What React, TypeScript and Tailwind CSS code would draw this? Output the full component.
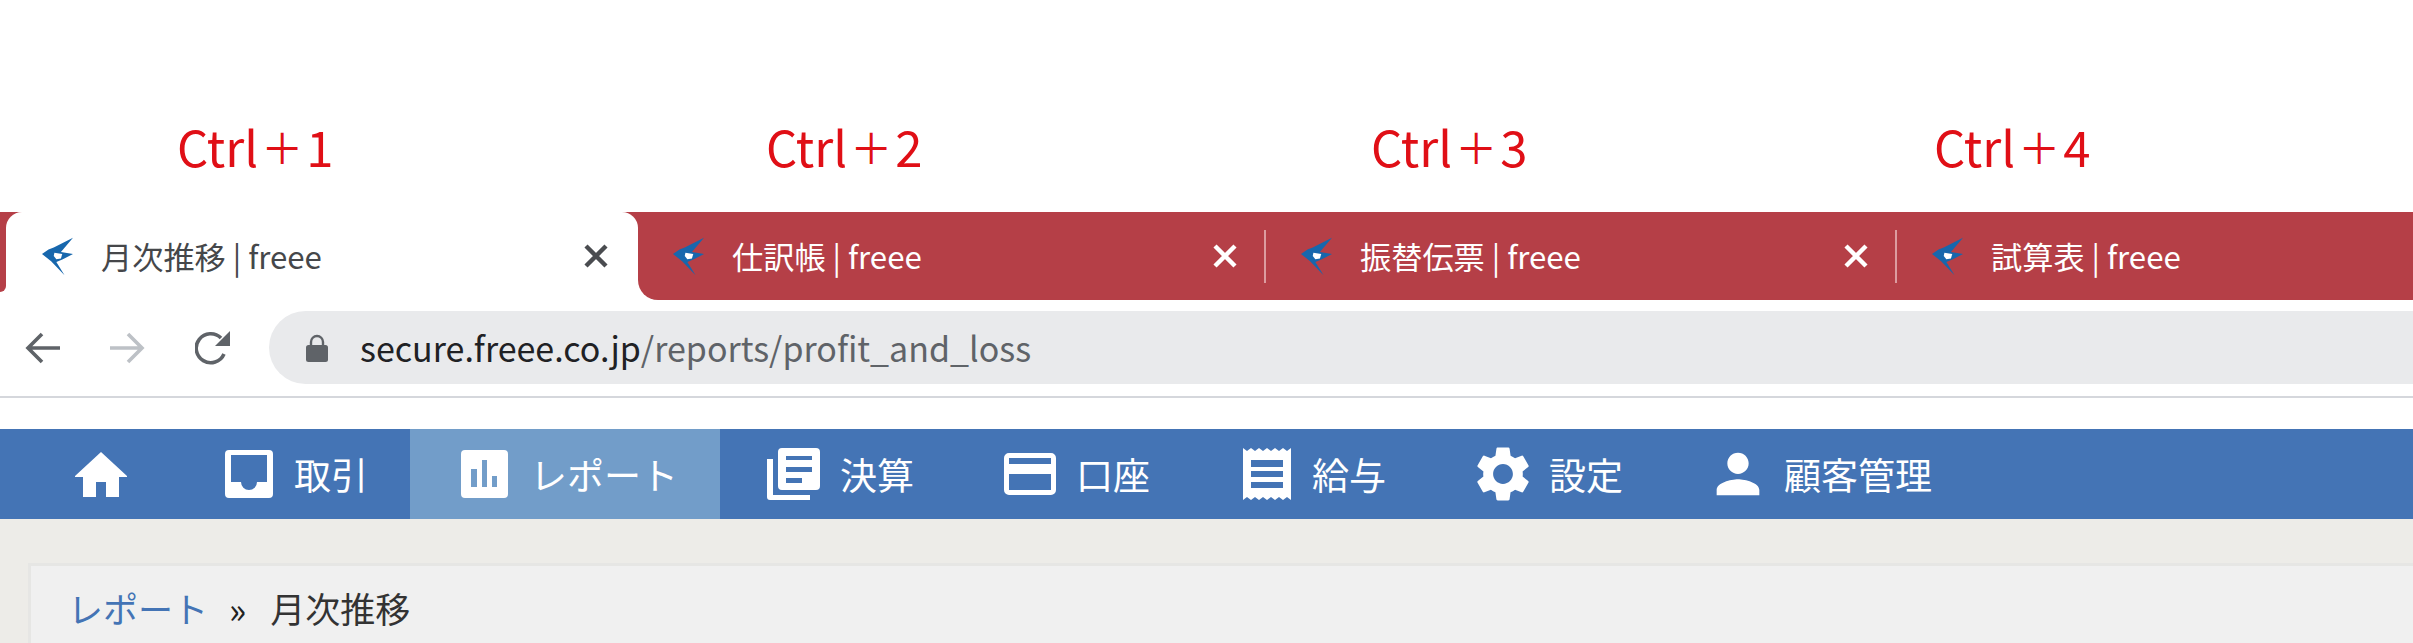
import React from "react";
import { MdPerson, MdSettings } from "react-icons/md";

const jp = { fontFamily: '"Noto Sans CJK JP", "Noto Sans", sans-serif' };

function Bird() {
  return (
    <svg viewBox="0 0 95 115" className="w-[31px] h-[39px] shrink-0">
      <path d="M0 50 L20 36 L36 30 L95 0 L58 44 L95 50 L64 66 L44 74 L69 115 L28 72 Z" fill="#1767ad" />
      <path d="M38 46 L62 50 L58 64 L44 66 L36 56 Z" fill="#fff" />
    </svg>
  );
}

function X({ color }: { color: string }) {
  return (
    <svg viewBox="0 0 24 24" className="w-[24px] h-[24px] shrink-0">
      <path d="M2 2 L22 22 M22 2 L2 22" stroke={color} strokeWidth="4.4" />
    </svg>
  );
}

function Tab({ title, w, last }: { title: string; w: string; last?: boolean }) {
  return (
    <div className={`flex items-center h-full pl-[35px] ${w}`}>
      <Bird />
      <span className="ml-[28px] text-[31.2px] text-white leading-none whitespace-nowrap">{title}</span>
      {!last && <div className="ml-auto mr-[27px]"><X color="#ffffff" /></div>}
      {!last && <div className="w-[2px] h-[53px] bg-[#dc9ca0] shrink-0" />}
    </div>
  );
}

function Arrow({ color, flip }: { color: string; flip?: boolean }) {
  return (
    <svg viewBox="0 0 35 32" className={`w-[35px] h-[32px] ${flip ? "-scale-x-100" : ""}`}>
      <path d="M35 16 H4 M17 2 L3 16 L17 30" fill="none" stroke={color} strokeWidth="3.6" />
    </svg>
  );
}

function NavItem({ icon, label, active, w, gap }: { icon: React.ReactNode; label: string; active?: boolean; w: string; gap: string }) {
  return (
    <div className={`flex items-center h-full shrink-0 ${w} ${gap} ${active ? "bg-[#729dc9]" : ""}`}>
      {icon}
      <span className="text-[37px] leading-none text-white whitespace-nowrap">{label}</span>
    </div>
  );
}

function Shortcut({ n, w }: { n: string; w: string }) {
  return (
    <span className={`flex items-center ${w}`}>
      Ctrl<span className="text-[42px] mx-[3px]">＋</span>{n}
    </span>
  );
}

export default function App() {
  return (
    <div className="w-[2413px] h-[643px] overflow-hidden bg-white flex flex-col" style={jp}>
      <div className="h-[212px] flex items-start pt-[118px] pl-[177px] text-[#e00f16] text-[49px] leading-[56px] whitespace-nowrap shrink-0">
        <Shortcut n="1" w="w-[589px]" />
        <Shortcut n="2" w="w-[605px]" />
        <Shortcut n="3" w="w-[563px]" />
        <Shortcut n="4" w="w-[160px]" />
      </div>

      <div className="h-[88px] flex shrink-0 bg-white">
        <div className="w-[6px] h-[80px] bg-[#b53f47] rounded-br-[10px] shrink-0" />
        <div className="w-[632px] h-full shrink-0 bg-[linear-gradient(#b53f47_50%,#ffffff_50%)]">
          <div className="h-full bg-white rounded-t-[16px] flex items-center pl-[36px]">
            <Bird />
            <span className="ml-[28px] text-[31.2px] text-[#45474a] leading-none whitespace-nowrap">月次推移 | freee</span>
            <div className="ml-auto mr-[30px]"><X color="#4a4c50" /></div>
          </div>
        </div>
        <div className="flex-1 bg-[#b53f47] rounded-bl-[20px] flex items-center">
          <Tab title="仕訳帳 | freee" w="w-[628px]" />
          <Tab title="振替伝票 | freee" w="w-[631px]" />
          <Tab title="試算表 | freee" w="flex-1" last />
        </div>
      </div>

      <div className="h-[98px] shrink-0 bg-white flex flex-col border-b-2 border-[#d5d7dc]">
        <div className="flex items-center h-[73px] mt-[11px] pl-[25px]">
          <Arrow color="#5f6368" />
          <div className="ml-[50px]"><Arrow color="#bdc1c6" flip /></div>
          <svg viewBox="0 0 35 34" className="w-[35px] h-[34px] ml-[50px]">
            <path d="M29 23 A14.5 14.5 0 1 1 26 7" fill="none" stroke="#5f6368" strokeWidth="3.6" />
            <path d="M35 0 V15 H20 Z" fill="#5f6368" />
          </svg>
          <div className="flex-1 ml-[39px] h-full bg-[#e9eaec] rounded-l-full flex items-center pl-[37px]">
            <svg viewBox="0 0 22 28" className="w-[22px] h-[28px]">
              <path d="M5 12 V8 a6 6 0 0 1 12 0 V12" fill="none" stroke="#5f6368" strokeWidth="2.4" />
              <rect x="0" y="11" width="22" height="17" rx="2.5" fill="#5f6368" />
            </svg>
            <span className="ml-[32px] text-[34px] leading-none whitespace-nowrap text-[#202124]">
              secure.freee.co.jp<span className="text-[#5f6368]">/reports/profit_and_loss</span>
            </span>
          </div>
        </div>
      </div>

      <div className="h-[31px] shrink-0 bg-white" />

      <div className="h-[90px] shrink-0 bg-[#4474b5] flex items-center">
        <div className="w-[225px] pl-[75px] shrink-0">
          <svg viewBox="0 0 52 45" className="w-[52px] h-[45px]">
            <path d="M26 0 L52 24 V25 H44 V45 H31 V30 H21 V45 H8 V25 H0 V24 Z" fill="#fff" />
          </svg>
        </div>
        <NavItem
          w="w-[185px]"
          gap="gap-[21px]"
          label="取引"
          icon={
            <svg viewBox="0 0 48 48" className="w-[48px] h-[48px] shrink-0">
              <path fillRule="evenodd" d="M4 0 H44 a4 4 0 0 1 4 4 V44 a4 4 0 0 1 -4 4 H4 a4 4 0 0 1 -4 -4 V4 a4 4 0 0 1 4 -4 Z M6 5 V32 H16 a8 8 0 0 0 16 0 H42 V5 Z" fill="#fff" />
            </svg>
          }
        />
        <NavItem
          active
          w="w-[310px] pl-[51px]"
          gap="gap-[22px]"
          label="レポート"
          icon={
            <svg viewBox="0 0 47 48" className="w-[47px] h-[48px] shrink-0">
              <path fillRule="evenodd" d="M4 0 H43 a4 4 0 0 1 4 4 V44 a4 4 0 0 1 -4 4 H4 a4 4 0 0 1 -4 -4 V4 a4 4 0 0 1 4 -4 Z M10 19 V37 H16 V19 Z M21 10 V37 H26 V10 Z M31 26 V37 H36 V26 Z" fill="#fff" />
            </svg>
          }
        />
        <NavItem
          w="w-[284px] pl-[47px]"
          gap="gap-[20px]"
          label="決算"
          icon={
            <svg viewBox="0 0 53 52" className="w-[53px] h-[52px] shrink-0">
              <path fillRule="evenodd" d="M15 0 H49 a4 4 0 0 1 4 4 V38 a4 4 0 0 1 -4 4 H15 a4 4 0 0 1 -4 -4 V4 a4 4 0 0 1 4 -4 Z M19 8 V12 H45 V8 Z M19 19 V24 H45 V19 Z M19 30 V35 H35 V30 Z" fill="#fff" />
              <path d="M0 11 H6 V47 H43 V52 H3 a3 3 0 0 1 -3 -3 Z" fill="#fff" />
            </svg>
          }
        />
        <NavItem
          w="w-[239px]"
          gap="gap-[20px]"
          label="口座"
          icon={
            <svg viewBox="0 0 52 42" className="w-[52px] h-[42px] shrink-0">
              <path fillRule="evenodd" d="M5 0 H47 a5 5 0 0 1 5 5 V37 a5 5 0 0 1 -5 5 H5 a5 5 0 0 1 -5 -5 V5 a5 5 0 0 1 5 -5 Z M5 5 V11 H47 V5 Z M5 21 V37 H47 V21 Z" fill="#fff" />
            </svg>
          }
        />
        <NavItem
          w="w-[232px]"
          gap="gap-[21px]"
          label="給与"
          icon={
            <svg viewBox="0 0 48 52" className="w-[48px] h-[52px] shrink-0">
              <path fillRule="evenodd" d="M0 0 L4 3 L8 0 L12 3 L16 0 L20 3 L24 0 L28 3 L32 0 L36 3 L40 0 L44 3 L48 0 V52 L44 49 L40 52 L36 49 L32 52 L28 49 L24 52 L20 49 L16 52 L12 49 L8 52 L4 49 L0 52 Z M8 12 V19 H40 V12 Z M8 23 V29 H40 V23 Z M8 34 V40 H40 V34 Z" fill="#fff" />
            </svg>
          }
        />
        <NavItem
          w="w-[240px]"
          gap="gap-[13px]"
          label="設定"
          icon={<MdSettings className="w-[66px] h-[66px] shrink-0 text-white -ml-[5px]" />}
        />
        <NavItem
          w="flex-1"
          gap="gap-[14px]"
          label="顧客管理"
          icon={<MdPerson className="w-[64px] h-[64px] shrink-0 text-white -ml-[9px]" />}
        />
      </div>

      <div className="flex-1 bg-[#edece8] pt-[44px] pl-[28px] min-h-0">
        <div className="h-full bg-[#f0f0f0] border-t-[3px] border-l-[3px] border-[#e6e6e4] flex items-center pl-[37px] pt-[6px] text-[35px] leading-none whitespace-nowrap">
          <span className="text-[#4474b5]">レポート</span>
          <span className="ml-[21px] text-[#222] text-[36px]">»</span>
          <span className="ml-[24px] text-[#333]">月次推移</span>
        </div>
      </div>
    </div>
  );
}
